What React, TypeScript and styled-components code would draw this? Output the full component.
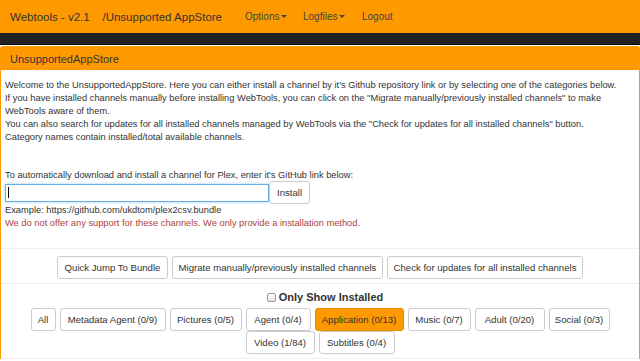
import React from "react";
import styled, { createGlobalStyle } from "styled-components";

const Global = createGlobalStyle`
  html, body { margin: 0; padding: 0; background: #fff; }
  body { font-family: "Liberation Sans", Arial, sans-serif; color: #333; }
  * { box-sizing: border-box; }
`;

const Navbar = styled.nav`
  height: 33px;
  background: #ff9900;
  display: flex;
  align-items: center;
  padding-left: 10px;
`;

const Brand = styled.span`
  font-size: 11.5px;
  color: #333;
  white-space: pre;
  width: 235px;
`;

const NavLink = styled.span<{ $w: number }>`
  font-size: 10px;
  color: #444;
  width: ${(p) => p.$w}px;
  display: inline-flex;
  align-items: center;
`;

const Caret = styled.span`
  display: inline-block;
  width: 0;
  height: 0;
  margin-left: 2px;
  border-top: 3px solid #444;
  border-left: 3px solid transparent;
  border-right: 3px solid transparent;
`;

const DarkBar = styled.div`
  height: 12px;
  background: #222;
  border-bottom: 1px solid #080808;
  margin-bottom: 1px;
`;

const Panel = styled.section`
  border: 1px solid #ff9900;
  border-radius: 3px 3px 0 0;
  border-bottom: none;
`;

const PanelHeading = styled.div`
  background: #ff9900;
  height: 23px;
  display: flex;
  align-items: center;
  padding-left: 9px;
  font-size: 11px;
  color: #333;
`;

const PanelBody = styled.div`
  padding: 9px 4px 0 4px;
  font-size: 9.3px;
  line-height: 13px;
`;

const Intro = styled.p`
  margin: 0 0 25px 0;
  white-space: nowrap;
`;

const Line = styled.div<{ $danger?: boolean }>`
  color: ${(p) => (p.$danger ? "#a94442" : "#333")};
  white-space: nowrap;
`;

const InputRow = styled.div`
  display: flex;
  align-items: center;
  margin-top: -1px;
`;

const UrlInput = styled.div`
  width: 264px;
  height: 18px;
  border: 1px solid #66afe9;
  box-shadow: 0 0 3px rgba(102, 175, 233, 0.6);
  display: flex;
  align-items: center;
  padding-left: 2px;
`;

const CaretLine = styled.span`
  width: 1px;
  height: 11px;
  background: #000;
`;

const Btn = styled.button<{ $active?: boolean; $w?: number }>`
  font-family: "Liberation Sans", Arial, sans-serif;
  font-size: 9.6px;
  color: #333;
  height: 23px;
  padding: 0;
  ${(p) => (p.$w ? `width: ${p.$w}px;` : "")}
  background: ${(p) => (p.$active ? "#ff9900" : "#fff")};
  border: 1px solid ${(p) => (p.$active ? "#e68a00" : "#ccc")};
  border-radius: 3px;
  flex: none;
`;

const Hr = styled.hr`
  border: none;
  border-top: 1px solid #eee;
  margin: 0;
`;

const Spacer = styled.div`
  height: 18px;
`;

const Center = styled.div<{ $gap: number; $pt: number; $pb: number }>`
  display: flex;
  flex-wrap: wrap;
  justify-content: center;
  gap: 1px ${(p) => p.$gap}px;
  padding: ${(p) => p.$pt}px 0 ${(p) => p.$pb}px 0;
`;

const CategoryRows = styled.div`
  display: flex;
  flex-direction: column;
  align-items: center;
  gap: 0;
  padding-bottom: 4px;
`;

const CheckRow = styled.label`
  display: flex;
  justify-content: center;
  align-items: center;
  gap: 3px;
  font-size: 11px;
  font-weight: bold;
  height: 12px;
  margin: 7px 0 5px 10px;
`;

const Box = styled.span`
  width: 9px;
  height: 9px;
  border: 1px solid #999;
  border-radius: 2px;
  background: linear-gradient(#fff, #e6e6e6);
`;

const row1 = [
  { t: "All", w: 25 },
  { t: "Metadata Agent (0/9)", w: 106 },
  { t: "Pictures (0/5)", w: 72 },
  { t: "Agent (0/4)", w: 65 },
  { t: "Application (0/13)", w: 89, a: true },
  { t: "Music (0/7)", w: 63 },
  { t: "Adult (0/20)", w: 70 },
  { t: "Social (0/3)", w: 61 },
];
const row2 = [
  { t: "Video (1/84)", w: 69 },
  { t: "Subtitles (0/4)", w: 76 },
];

export default function App() {
  return (
    <>
      <Global />
      <Navbar>
        <Brand>{"Webtools - v2.1    /Unsupported AppStore"}</Brand>
        <NavLink $w={58}>
          Options<Caret />
        </NavLink>
        <NavLink $w={59}>
          Logfiles<Caret />
        </NavLink>
        <NavLink $w={40}>Logout</NavLink>
      </Navbar>
      <DarkBar />
      <Panel>
        <PanelHeading>UnsupportedAppStore</PanelHeading>
        <PanelBody>
          <Intro>
            Welcome to the UnsupportedAppStore. Here you can either install a channel by it's Github repository link or by selecting one of the categories below.
            <br />
            If you have installed channels manually before installing WebTools, you can click on the "Migrate manually/previously installed channels" to make
            <br />
            WebTools aware of them.
            <br />
            You can also search for updates for all installed channels managed by WebTools via the "Check for updates for all installed channels" button.
            <br />
            Category names contain installed/total available channels.
          </Intro>
          <Line>To automatically download and install a channel for Plex, enter it's GitHub link below:</Line>
          <InputRow>
            <UrlInput>
              <CaretLine />
            </UrlInput>
            <Btn $w={41}>Install</Btn>
          </InputRow>
          <Line>Example: https://github.com/ukdtom/plex2csv.bundle</Line>
          <Line $danger>We do not offer any support for these channels. We only provide a installation method.</Line>
        </PanelBody>
        <Spacer />
        <Hr />
        <Center $gap={4} $pt={7} $pb={4}>
          <Btn $w={111}>Quick Jump To Bundle</Btn>
          <Btn $w={211}>Migrate manually/previously installed channels</Btn>
          <Btn $w={196}>Check for updates for all installed channels</Btn>
        </Center>
        <Hr />
        <CheckRow>
          <Box />
          Only Show Installed
        </CheckRow>
        <CategoryRows>
          <Center $gap={4} $pt={0} $pb={0}>
            {row1.map((b) => (
              <Btn key={b.t} $w={b.w} $active={b.a}>
                {b.t}
              </Btn>
            ))}
          </Center>
          <Center $gap={4} $pt={0} $pb={0}>
            {row2.map((b) => (
              <Btn key={b.t} $w={b.w}>
                {b.t}
              </Btn>
            ))}
          </Center>
        </CategoryRows>
        <Hr />
      </Panel>
    </>
  );
}
